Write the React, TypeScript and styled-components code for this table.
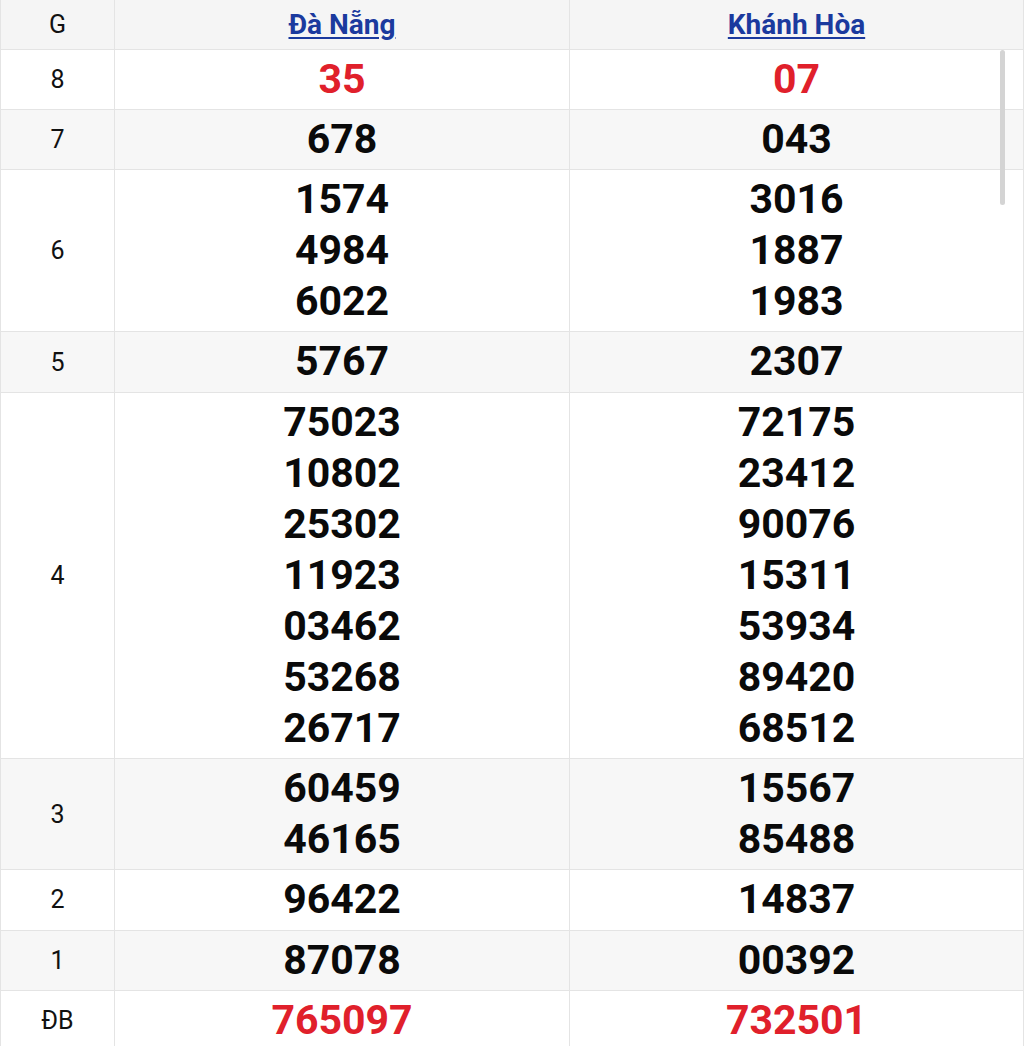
import styled, { createGlobalStyle } from "styled-components";

const GlobalStyle = createGlobalStyle`
  html, body {
    margin: 0;
    padding: 0;
    background: #ffffff;
    font-family: Roboto, "Liberation Sans", Arial, sans-serif;
  }
`;

const Wrapper = styled.div`
  position: relative;
  width: 1024px;
  height: 1046px;
  overflow: hidden;
`;

const Table = styled.table`
  width: 1024px;
  border-collapse: collapse;
  table-layout: fixed;
`;

const HeadCell = styled.th<{ $w?: number }>`
  width: ${(p) => (p.$w ? `${p.$w}px` : "auto")};
  height: 49px;
  padding: 0;
  background: #f5f5f5;
  border: 1px solid #e4e4e4;
  border-top: none;
  font-weight: 400;
  text-align: center;
  vertical-align: middle;
`;

const LabelHead = styled.span`
  font-size: 25px;
  color: #111;
`;

const ProvinceLink = styled.a`
  font-size: 28px;
  font-weight: 700;
  color: #1b3a9e;
  text-decoration: underline;
  text-underline-offset: 3px;
  text-decoration-thickness: 2px;
`;

const Row = styled.tr<{ $striped: boolean }>`
  background: ${(p) => (p.$striped ? "#f7f7f7" : "#ffffff")};
`;

const Label = styled.td`
  padding: 0;
  border: 1px solid #e4e4e4;
  text-align: center;
  vertical-align: middle;
  font-size: 25px;
  color: #111;
`;

const Numbers = styled.td`
  padding: 4px 0 4px;
  border: 1px solid #e4e4e4;
  text-align: center;
  vertical-align: middle;
`;

const Num = styled.div<{ $red?: boolean }>`
  font-size: 41px;
  line-height: 51.1px;
  font-weight: 700;
  color: ${(p) => (p.$red ? "#e0202b" : "#0a0a0a")};
`;

const ScrollThumb = styled.div`
  position: absolute;
  left: 1000px;
  top: 50px;
  width: 5px;
  height: 155px;
  border-radius: 3px;
  background: #d4d4d4;
`;

interface Prize {
  label: string;
  red?: boolean;
  daNang: string[];
  khanhHoa: string[];
}

const prizes: Prize[] = [
  { label: "8", red: true, daNang: ["35"], khanhHoa: ["07"] },
  { label: "7", daNang: ["678"], khanhHoa: ["043"] },
  { label: "6", daNang: ["1574", "4984", "6022"], khanhHoa: ["3016", "1887", "1983"] },
  { label: "5", daNang: ["5767"], khanhHoa: ["2307"] },
  {
    label: "4",
    daNang: ["75023", "10802", "25302", "11923", "03462", "53268", "26717"],
    khanhHoa: ["72175", "23412", "90076", "15311", "53934", "89420", "68512"],
  },
  { label: "3", daNang: ["60459", "46165"], khanhHoa: ["15567", "85488"] },
  { label: "2", daNang: ["96422"], khanhHoa: ["14837"] },
  { label: "1", daNang: ["87078"], khanhHoa: ["00392"] },
  { label: "ĐB", red: true, daNang: ["765097"], khanhHoa: ["732501"] },
];

const App = () => (
  <Wrapper>
    <GlobalStyle />
    <Table>
      <thead>
        <tr>
          <HeadCell $w={113}>
            <LabelHead>G</LabelHead>
          </HeadCell>
          <HeadCell $w={454}>
            <ProvinceLink href="#">Đà Nẵng</ProvinceLink>
          </HeadCell>
          <HeadCell>
            <ProvinceLink href="#">Khánh Hòa</ProvinceLink>
          </HeadCell>
        </tr>
      </thead>
      <tbody>
        {prizes.map((p, i) => (
          <Row key={p.label} $striped={i % 2 === 1}>
            <Label>{p.label}</Label>
            <Numbers>
              {p.daNang.map((n) => (
                <Num key={n} $red={p.red}>{n}</Num>
              ))}
            </Numbers>
            <Numbers>
              {p.khanhHoa.map((n) => (
                <Num key={n} $red={p.red}>{n}</Num>
              ))}
            </Numbers>
          </Row>
        ))}
      </tbody>
    </Table>
    <ScrollThumb />
  </Wrapper>
);

export default App;
